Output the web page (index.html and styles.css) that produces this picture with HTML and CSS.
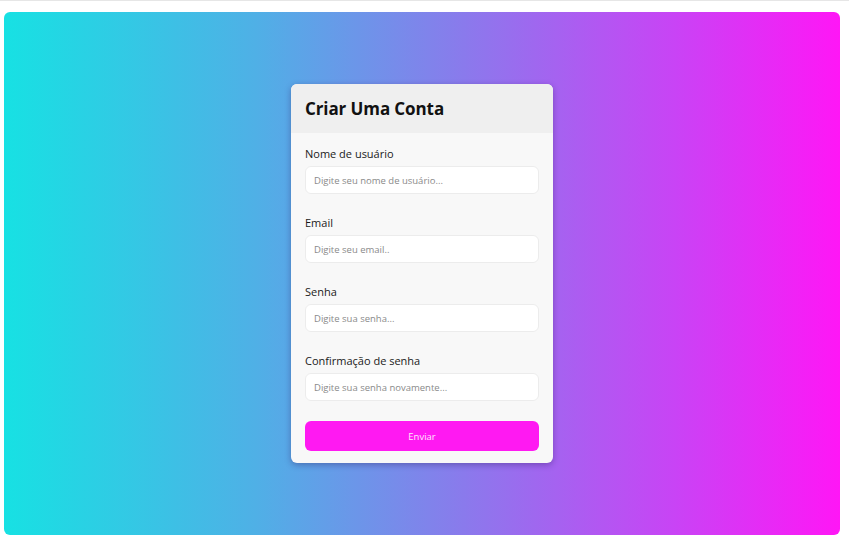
FILE: index.html
```html
<!DOCTYPE html>
<html lang="pt-BR">
<head>
<meta charset="utf-8">
<title>Criar Uma Conta</title>
<link rel="stylesheet" href="styles.css">
</head>
<body>
<div class="page">
  <main class="stage">
    <form class="card">
      <div class="card-header">
        <h1 class="title">Criar Uma Conta</h1>
      </div>
      <div class="card-body">
        <div class="field">
          <label class="label" for="user">Nome de usuário</label>
          <input class="input" id="user" type="text" placeholder="Digite seu nome de usuário...">
        </div>
        <div class="field">
          <label class="label" for="email">Email</label>
          <input class="input" id="email" type="email" placeholder="Digite seu email..">
        </div>
        <div class="field">
          <label class="label" for="pass">Senha</label>
          <input class="input" id="pass" type="password" placeholder="Digite sua senha...">
        </div>
        <div class="field">
          <label class="label" for="pass2">Confirmação de senha</label>
          <input class="input" id="pass2" type="password" placeholder="Digite sua senha novamente...">
        </div>
        <button class="btn" type="button">Enviar</button>
      </div>
    </form>
  </main>
</div>
</body>
</html>
```

FILE: styles.css
```css
* { box-sizing: border-box; }
html, body { margin: 0; height: 100%; }
body {
  background: #ffffff;
  font-family: "Open Sans", "Liberation Sans", sans-serif;
  border-top: 1px solid #e6e6e6;
}
.page {
  height: 542px;
  padding: 11px 9px 8px 4px;
  display: flex;
}
.stage {
  flex: 1;
  border-radius: 6px;
  background: linear-gradient(90deg, #17e1e3 0%, #4fb0e6 30%, #8a7aec 55%, #c844f5 80%, #ff16f6 100%);
  display: flex;
  align-items: center;
  justify-content: center;
}
.card {
  width: 262px;
  background: #f8f8f8;
  border-radius: 6px;
  box-shadow: 0 2px 6px rgba(40, 20, 90, 0.35);
  overflow: hidden;
}
.card-header {
  height: 49px;
  background: #efefef;
  padding: 0 14px;
  display: flex;
  align-items: center;
}
.title {
  margin: 0;
  font-size: 17px;
  font-weight: 700;
  color: #111;
  letter-spacing: -0.1px;
}
.card-body {
  padding: 14px 14px 12px;
  display: flex;
  flex-direction: column;
}
.field {
  display: flex;
  flex-direction: column;
  margin-bottom: 22px;
}
.field:last-of-type { margin-bottom: 20px; }
.label {
  font-size: 11px;
  line-height: 14px;
  color: #1a1a1a;
  margin-bottom: 5px;
}
.input {
  height: 28px;
  border: 1px solid #ececec;
  border-radius: 6px;
  background: #ffffff;
  padding: 0 8px;
  font-family: inherit;
  font-size: 9.5px;
  color: #333;
  outline: none;
}
.input::placeholder { color: #8a8a8a; }
.btn {
  height: 30px;
  border: none;
  border-radius: 6px;
  background: #ff19f2;
  color: #ffe6fc;
  font-family: inherit;
  font-size: 9.5px;
  cursor: pointer;
}
```
